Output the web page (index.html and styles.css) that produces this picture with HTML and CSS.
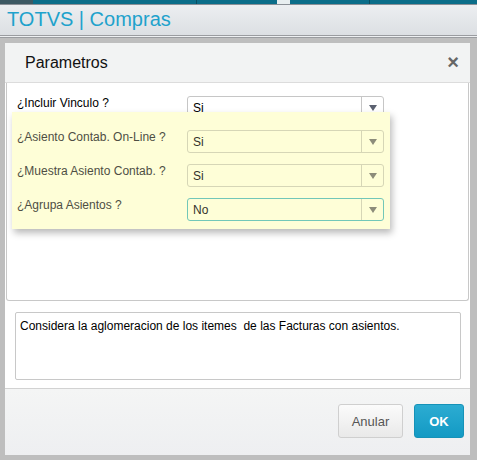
FILE: index.html
```html
<!doctype html>
<html lang="es">
<head>
	<meta charset="utf-8">
	<title>TOTVS | Compras</title>
	<link rel="stylesheet" href="styles.css">
</head>
<body>
	<div class="topStrip">
		<span class="seg segDark"></span>
		<span class="seg segA"></span>
		<span class="seg segB"></span>
		<span class="seg segLight"></span>
		<span class="seg segC"></span>
		<span class="seg segD"></span>
	</div>
	<div class="appBar"><h1 class="appTitle">TOTVS | Compras</h1></div>

	<div class="dialog">
		<div class="dlgHead">
			<span class="dlgTitle">Parametros</span>
			<span class="dlgClose">&times;</span>
		</div>

		<div class="dlgBody">
			<div class="row">
				<label class="lbl">¿Incluir Vinculo ?</label>
				<div class="sel"><span class="selVal">Si</span><i class="selBtn"></i></div>
			</div>

			<!-- ayuda flotante amarilla -->
			<div class="tipBox">
				<div class="row">
					<label class="lbl">¿Asiento Contab. On-Line ?</label>
					<div class="sel"><span class="selVal">Si</span><i class="selBtn"></i></div>
				</div>
				<div class="row">
					<label class="lbl">¿Muestra Asiento Contab. ?</label>
					<div class="sel"><span class="selVal">Si</span><i class="selBtn"></i></div>
				</div>
				<div class="row">
					<label class="lbl">¿Agrupa Asientos ?</label>
					<div class="sel selFocus"><span class="selVal">No</span><i class="selBtn"></i></div>
				</div>
			</div>
		</div>

		<div class="helpArea">
			<div class="helpText">Considera la aglomeracion de los itemes&nbsp; de las Facturas con asientos.</div>
		</div>

		<div class="dlgFoot">
			<button class="btn btnCancel">Anular</button>
			<button class="btn btnOk">OK</button>
		</div>
	</div>
</body>
</html>
```

FILE: styles.css
```css
*{ padding: 0; margin: 0; box-sizing: border-box }
body{ background: #bebebe; font-family: "Liberation Sans", Arial, sans-serif; font-size: 12px; color: #000; width: 477px; height: 460px; overflow: hidden }

.topStrip{ display: flex; height: 5px; background: #0b6d89; border-bottom: 1px solid #8a8f96 }
.seg{ display: block; height: 4px }
.segDark{ width: 33px; background: #3d5963 }
.segA{ width: 164px; background: #0b6d89; border-right: 1px solid #0a4d60 }
.segB{ width: 80px; background: #0b6d89 }
.segLight{ width: 13px; background: #e8eef0 }
.segC{ width: 80px; background: #0b6d89; border-right: 1px solid #0a4d60 }
.segD{ flex: 1; background: #0b6d89 }

.appBar{ height: 31px; background: linear-gradient(#eceef1, #dcdfe3); border-bottom: 1px solid #9a9ca0; box-shadow: 0 1px 0 #eef0f2, 0 2px 0 #9a9ca0; padding-left: 7px }
.appTitle{ font-weight: normal; font-size: 20px; line-height: 28px; color: #1ea2cc }

.dialog{ margin: 7px 0 0 5px; width: 465px; height: 412px; background: #fff; display: flex; flex-direction: column }

.dlgHead{ height: 40px; background: #f2f3f3; display: flex; align-items: center; justify-content: space-between; padding: 0 11px 0 20px; border-bottom: 1px solid #dcdcdc }
.dlgTitle{ font-size: 16px; color: #111; padding-top: 1px }
.dlgClose{ font-size: 20px; font-weight: bold; color: #666; line-height: 20px; margin-top: -2px }

.dlgBody{ position: relative; margin: 0 1px; height: 218px; border: 1px solid #c8c8c8; border-top: none; border-radius: 0 0 3px 3px; padding: 13px 10px }

.row{ display: flex; align-items: flex-start; height: 23px }
.lbl{ width: 170px; line-height: 14px; color: #000 }

.sel{ width: 197px; height: 23px; border: 1px solid #c6c6c6; border-radius: 3px; display: flex; align-items: center; background: #fff }
.selVal{ flex: 1; padding-left: 5px; font-size: 12px; color: #000; padding-top: 1px }
.selBtn{ display: block; width: 22px; height: 21px; border-left: 1px solid #c6c6c6; position: relative }
.selBtn:after{ content: ""; position: absolute; left: 7px; top: 8px; border-style: solid; border-width: 6px 4px 0 4px; border-color: #5b6170 transparent transparent transparent }

.tipBox{ position: absolute; left: 5px; top: 29px; width: 378px; height: 117px; background: #fefed7; box-shadow: 2px 4px 7px rgba(0,0,0,.28); padding: 18px 5px 0 5px; display: flex; flex-direction: column; gap: 11px }
.tipBox .lbl{ color: #4e4e44 }
.tipBox .sel{ background: #fefed7; border-color: #d6d6b6 }
.tipBox .selVal{ color: #33332c }
.tipBox .selBtn{ border-left-color: #d6d6b6 }
.tipBox .selBtn:after{ border-top-color: #8c8c7a }
.tipBox .selFocus{ border-color: #72c7b8 }

.helpArea{ height: 87px; padding: 11px 9px 0 10px }
.helpText{ height: 68px; border: 1px solid #c8c8c8; border-radius: 2px; padding: 6px 4px; line-height: 14px; color: #000 }

.dlgFoot{ flex: 1; border-top: 1px solid #d2d2d2; background: linear-gradient(#f4f5f5, #eeeff1); display: flex; justify-content: flex-end; align-items: flex-start; padding: 15px 6px 0 0; gap: 11px }
.btn{ height: 34px; border-radius: 3px; font-family: "Liberation Sans", Arial, sans-serif; font-size: 13px; cursor: pointer }
.btnCancel{ width: 65px; border: 1px solid #cfcfcf; background: linear-gradient(#fbfbfb, #e9e9e9); color: #555 }
.btnOk{ width: 50px; border: 1px solid #1592b8; background: linear-gradient(#2cacd2, #139ac4); color: #fff; font-weight: bold }
```
